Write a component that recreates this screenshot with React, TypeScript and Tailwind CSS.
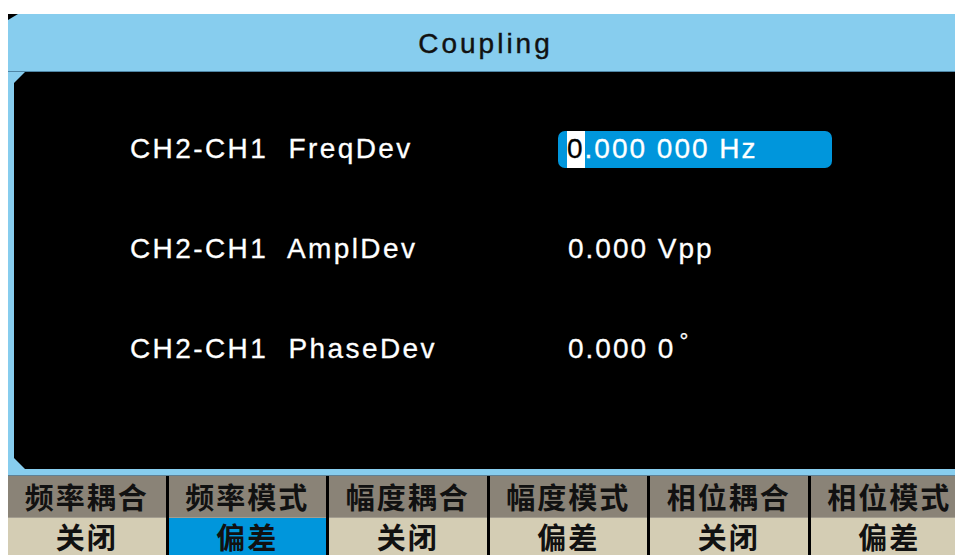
import React from "react";

const menu = [
  { top: "频率耦合", bottom: "关闭", active: false },
  { top: "频率模式", bottom: "偏差", active: true },
  { top: "幅度耦合", bottom: "关闭", active: false },
  { top: "幅度模式", bottom: "偏差", active: false },
  { top: "相位耦合", bottom: "关闭", active: false },
  { top: "相位模式", bottom: "偏差", active: false },
];

const latin = { fontFamily: '"Liberation Sans", Arial, sans-serif' };
const cjk = { fontFamily: '"Noto Sans CJK SC", "Noto Sans", sans-serif' };

export default function App() {
  return (
    <div className="w-[955px] h-[555px] overflow-hidden bg-white">
      <div className="pt-[14px] pl-[8px]">
        <div className="w-[963px]">
          {/* header */}
          <div className="relative h-[57px] bg-[#87cdee] flex items-center justify-center">
            <div className="absolute left-0 top-0 w-[10px] h-[6px] bg-black [clip-path:polygon(0_0,100%_0,0_100%)]" />
            <span
              className="text-[28px] leading-none text-[#111] tracking-[3px] pt-[2px] pr-[8px] [-webkit-text-stroke:0.4px_#111]"
              style={latin}
            >
              Coupling
            </span>
          </div>
          <div className="h-px bg-[#4f86a6]" />
          {/* main panel */}
          <div className="flex bg-[#87cdee]">
            <div className="w-[6px]" />
            <div className="flex-1 h-[397px] bg-black [clip-path:polygon(11px_0,100%_0,100%_100%,11px_100%,0_calc(100%-11px),0_11px)] pt-[27px] pl-[116px]">
              <div className="flex items-center h-[100px]">
                <div
                  className="w-[428px] text-white text-[28px] leading-none tracking-[2.4px] whitespace-pre [-webkit-text-stroke:0.3px_white]"
                  style={latin}
                >
                  {"CH2-CH1  FreqDev"}
                </div>
                <div className="w-[274px] h-[37px] rounded-[7px] bg-[#0096dc] flex items-center pl-[9px]">
                  <span
                    className="text-white text-[28px] leading-none tracking-[2px] whitespace-pre flex items-center [-webkit-text-stroke:0.3px_white]"
                    style={latin}
                  >
                    <span className="bg-white text-black h-[37px] flex items-center [-webkit-text-stroke:0.3px_black]">0</span>
                    {".000 000 Hz"}
                  </span>
                </div>
              </div>
              <div className="flex items-center h-[100px]">
                <div
                  className="w-[428px] text-white text-[28px] leading-none tracking-[2.4px] whitespace-pre [-webkit-text-stroke:0.3px_white]"
                  style={latin}
                >
                  {"CH2-CH1  AmplDev"}
                </div>
                <div
                  className="pl-[10px] text-white text-[28px] leading-none tracking-[2px] whitespace-pre [-webkit-text-stroke:0.3px_white]"
                  style={latin}
                >
                  {"0.000 Vpp"}
                </div>
              </div>
              <div className="flex items-center h-[100px]">
                <div
                  className="w-[428px] text-white text-[28px] leading-none tracking-[2.4px] whitespace-pre [-webkit-text-stroke:0.3px_white]"
                  style={latin}
                >
                  {"CH2-CH1  PhaseDev"}
                </div>
                <div
                  className="pl-[10px] text-white text-[28px] leading-none tracking-[2px] whitespace-pre [-webkit-text-stroke:0.3px_white] flex items-start"
                  style={latin}
                >
                  <span>{"0.000 0"}</span>
                  <span className="text-[22px] -mt-[4px] ml-[4px]">°</span>
                </div>
              </div>
            </div>
          </div>
          <div className="h-[6px] bg-[#87cdee]" />
          <div className="h-px bg-[#5f8196]" />
          {/* menu */}
          <div className="grid grid-cols-[repeat(6,157.5px)] gap-x-[3px] bg-black w-max">
            {menu.map((m, i) => (
              <div key={i} className="flex flex-col">
                <div
                  className="h-[42px] bg-[#8a8377] flex items-center justify-center text-[29px] font-bold text-[#111] leading-none tracking-[2px] border-b border-[#a39d90]"
                  style={cjk}
                >
                  {m.top}
                </div>
                <div
                  className={
                    "h-[40px] flex items-start justify-center pt-[4px] text-[29px] font-bold text-[#111] leading-none tracking-[2px] " +
                    (m.active ? "bg-[#0096dc]" : "bg-[#d4cdb4]")
                  }
                  style={cjk}
                >
                  {m.bottom}
                </div>
              </div>
            ))}
          </div>
        </div>
      </div>
    </div>
  );
}
